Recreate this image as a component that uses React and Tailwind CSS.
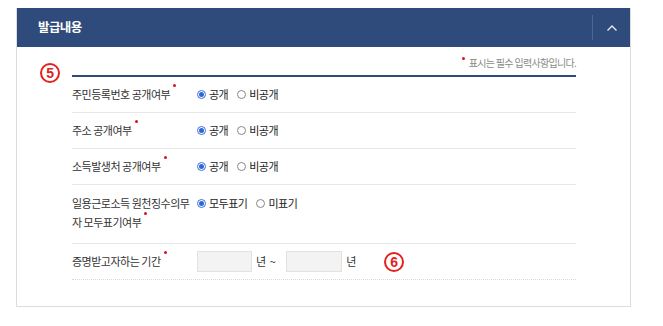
import React from "react";

const font = { fontFamily: '"Noto Sans CJK KR", "Noto Sans", sans-serif' };

function Dot({ className = "" }) {
  return (
    <span
      className={
        "relative inline-block w-[3px] h-[3px] rounded-full bg-[#d6131b] align-top ml-[3px] " +
        className
      }
    />
  );
}

function Radio({ checked, label }) {
  return (
    <span className="inline-flex items-center mr-[9px]">
      <span
        className={
          "w-[9px] h-[9px] rounded-full border flex items-center justify-center bg-white " +
          (checked ? "border-[#3a6fd8]" : "border-[#888]")
        }
      >
        {checked && <span className="w-[5px] h-[5px] rounded-full bg-[#2f66d4]" />}
      </span>
      <span className="ml-[3px] text-[#222]">{label}</span>
    </span>
  );
}

function Circled({ n, className = "" }) {
  return (
    <span
      className={
        "absolute w-[20px] h-[20px] rounded-full border-2 border-[#e0231f] text-[#e0231f] font-bold text-[14px] leading-none flex items-center justify-center " +
        className
      }
      style={{ fontFamily: '"Liberation Sans", Arial, sans-serif' }}
    >
      {n}
    </span>
  );
}

function Row({ label, children, className = "h-[36px] items-center" }) {
  return (
    <div className={"flex border-b border-[#e6e6e6] " + className}>
      <div className="w-[125px] shrink-0">{label}</div>
      <div className="flex items-center">{children}</div>
    </div>
  );
}

export default function App() {
  return (
    <div
      className="w-[663px] h-[326px] bg-white pt-[8px] pl-[16px] relative text-[11px] tracking-[-0.5px] text-[#333]"
      style={font}
    >
      <div className="w-[615px] h-[299px] border border-[#dcdcdc] border-t-0">
        <div className="h-[39px] bg-[#2f4b7c] flex items-center justify-between">
          <span className="pl-[21px] text-white font-bold text-[12.5px] tracking-[-0.6px]">발급내용</span>
          <div className="w-[38px] h-[25px] border-l border-[#4b6594] flex items-center justify-center">
            <svg width="12" height="8" viewBox="0 0 12 8">
              <polyline points="1.5,6.5 6,2 10.5,6.5" fill="none" stroke="#e8edf5" strokeWidth="1.4" />
            </svg>
          </div>
        </div>
        <div className="pl-[55px] pr-[54px]">
          <div className="h-[28px] flex items-center justify-end pt-[2px] text-[10px] text-[#8a8a8a] tracking-[-0.7px]">
            <span className="relative -top-[4px] w-[3px] h-[3px] rounded-full bg-[#d6131b] mr-[4px]" />
            표시는 필수 입력사항입니다.
          </div>
          <div className="h-[2px] bg-[#2f4b7c]" />
          <Row
            label={
              <span>
                주민등록번호 공개여부<Dot className="top-[-2px]" />
              </span>
            }
          >
            <Radio checked label="공개" />
            <Radio label="비공개" />
          </Row>
          <Row
            label={
              <span>
                주소 공개여부<Dot className="top-[-2px]" />
              </span>
            }
          >
            <Radio checked label="공개" />
            <Radio label="비공개" />
          </Row>
          <Row
            label={
              <span>
                소득발생처 공개여부<Dot className="top-[-2px]" />
              </span>
            }
          >
            <Radio checked label="공개" />
            <Radio label="비공개" />
          </Row>
          <Row
            className="items-start pt-[9px] pb-[11px] leading-[19px]"
            label={
              <span>
                일용근로소득 원천징수의무
                <br />
                자 모두표기여부<Dot className="top-[-1px]" />
              </span>
            }
          >
            <Radio checked label="모두표기" />
            <Radio label="미표기" />
          </Row>
          <div className="flex h-[36px] items-center border-b border-dotted border-[#d8d8d8]">
            <div className="w-[125px] shrink-0">
              증명받고자하는 기간<Dot className="top-[-2px]" />
            </div>
            <div className="w-[55px] h-[21px] bg-[#f3f3f3] border border-[#e2e2e2]" />
            <span className="ml-[4px]">년</span>
            <span className="ml-[4px] mr-[11px]">~</span>
            <div className="w-[56px] h-[21px] bg-[#f3f3f3] border border-[#e2e2e2]" />
            <span className="ml-[4px]">년</span>
          </div>
        </div>
      </div>
      <Circled n="5" className="left-[40px] top-[63px]" />
      <Circled n="6" className="left-[384px] top-[252px]" />
    </div>
  );
}
